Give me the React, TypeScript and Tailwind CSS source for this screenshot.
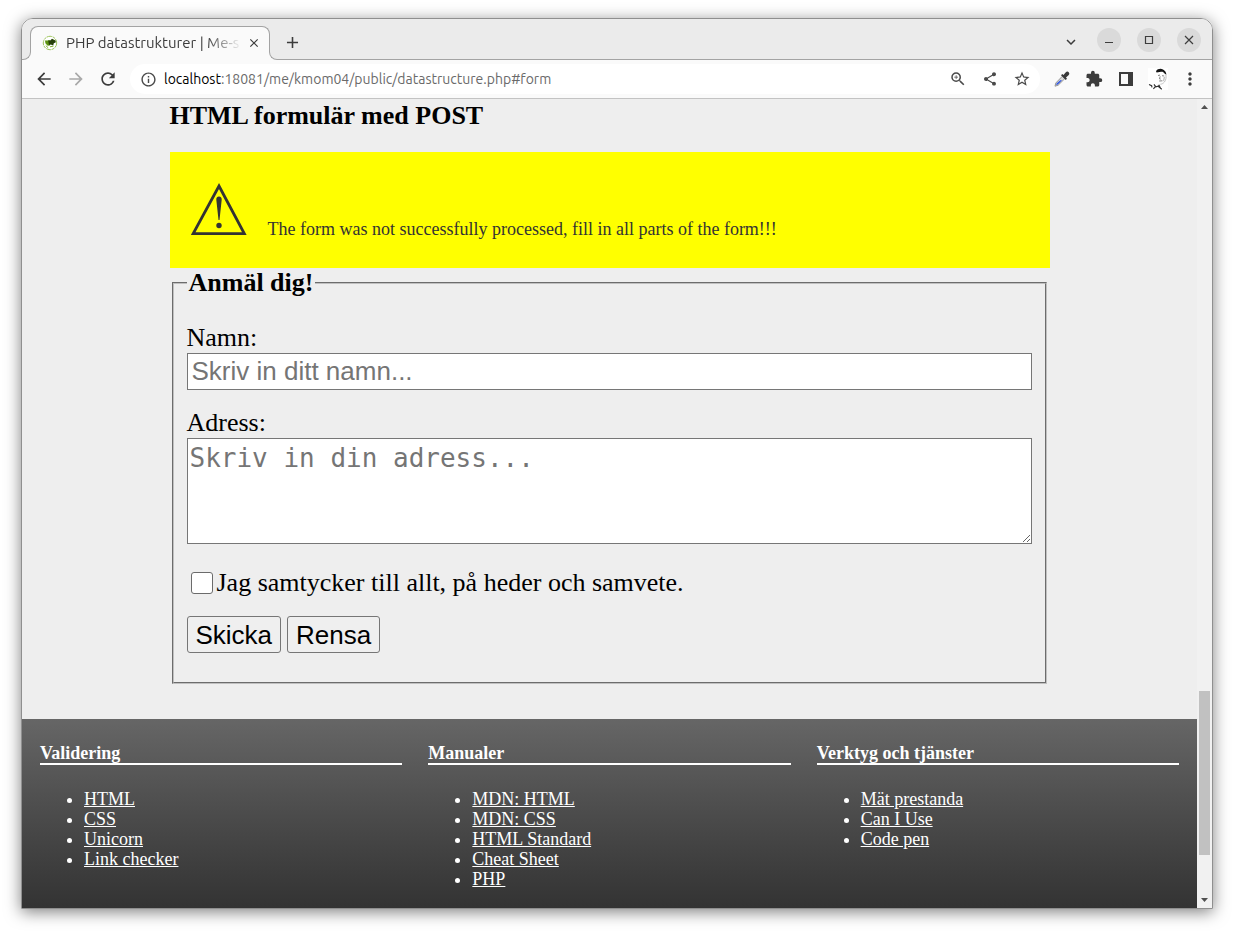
import type { ReactNode } from "react";
import {
  MdAdd,
  MdArrowBack,
  MdArrowForward,
  MdClose,
  MdExpandMore,
  MdExtension,
  MdInfoOutline,
  MdMoreVert,
  MdRefresh,
  MdShare,
  MdStarBorder,
  MdZoomIn,
} from "react-icons/md";

const footerColumns = [
  { title: "Validering", links: ["HTML", "CSS", "Unicorn", "Link checker"] },
  { title: "Manualer", links: ["MDN: HTML", "MDN: CSS", "HTML Standard", "Cheat Sheet", "PHP"] },
  { title: "Verktyg och tjänster", links: ["Mät prestanda", "Can I Use", "Code pen"] },
];

function IconButton({ label, children }: { label: string; children: ReactNode }) {
  return (
    <button type="button" aria-label={label} className="flex size-5 shrink-0 items-center justify-center">
      {children}
    </button>
  );
}

function WindowButton({ label, children }: { label: string; children: ReactNode }) {
  return (
    <button
      type="button"
      aria-label={label}
      className="flex size-6 shrink-0 items-center justify-center rounded-full bg-[#dadada] text-[#3d3d3d]"
    >
      <svg width="10" height="10" viewBox="0 0 10 10" fill="none" stroke="currentColor" strokeWidth="1.2">
        {children}
      </svg>
    </button>
  );
}

function Favicon() {
  return (
    <svg width="16" height="16" viewBox="0 0 16 16" className="shrink-0" aria-hidden="true">
      <circle cx="8" cy="8" r="6.700" fill="#fff" stroke="#9cc45c" strokeWidth="1" strokeDasharray="5 .8 3 .6" />
      <path d="M3 5.600 5.600 5.400 7.600 5l1 4-1.200 1.800-2-.2L3.400 8.200Z" fill="#5d9412" />
      <path d="M6.200 5.400 8.200 5.600 10 3.800l2 .9L13.800 5.800l-.2 1.800-1.800.6-.6 2.400L8.800 9.600 7 10Z" fill="#27400a" />
      <path d="M3.800 10.600 6.200 12.800M8 11.800l3.400-.6" stroke="#84b23a" strokeWidth="1" />
    </svg>
  );
}

function Eyedropper() {
  return (
    <svg width="16" height="16" viewBox="0 0 16 16" aria-hidden="true">
      <path d="M8.400 5.200 10.800 7.600 4.200 14.200 1 15.200l.8-3.200Z" fill="#d8d8d8" stroke="#8c8c8c" strokeWidth=".9" />
      <path d="M6.200 9.200h1.900l-4.300 4.300-1.700.6.500-1.600Z" fill="#2f55e0" />
      <path
        d="M7 4.300 8.300 3l1.200 1L11.600 1.400c1.200-1.200 2.400-.9 3.100-.2.800.8.900 2-.2 3.100L12 6.500l1 1.200L11.700 9Z"
        fill="#3a3a3a"
      />
    </svg>
  );
}

function Avatar() {
  return (
    <svg width="20" height="22" viewBox="0 0 20 22" aria-hidden="true">
      <rect width="20" height="22" fill="#fff" />
      <path d="M8 3.200C9.500.8 13 .2 15 1.600c2 1 3.200 2.800 3.400 5.200l-1.600-1c-1-1.600-2.200-2.200-3.800-2L8.600 4.600Z" fill="#161616" />
      <path d="M17.800 6.500c.7 2.700.2 5.500-1.400 7.500-1.200 1.400-2.600 2.200-4 2.200" fill="none" stroke="#c2c2c2" strokeWidth="1" />
      <path d="M10 7.500l2-.4M14 7.700l2.200.3M12.200 8.400l-.8 2.400 1.400.3M11.200 13l3.200-.2" stroke="#777" strokeWidth=".9" fill="none" />
      <path d="M15.600 9.200l1.600-.4-.8 3.600-1.600 1.200Z" fill="#c4c4c4" />
      <path d="M1 16.500l2.600 1.200.4 1.600M6 16.400l1.800 2.400 2.400-.6 3.600 3M8 17.800l-2.600 3M10.800 16.800l1.800 3.600" stroke="#333" strokeWidth="1.200" fill="none" />
    </svg>
  );
}

function Tab() {
  return (
    <div className="relative h-[34px] w-[240px] shrink-0">
      <div className="absolute inset-0 flex flex-col" aria-hidden="true">
        <div className="flex-1 rounded-t-lg border-x border-t border-[#a3a3a3] bg-[#fafafa]" />
        <div className="h-2 bg-[#fafafa]" />
      </div>
      <div className="absolute bottom-0 -left-2 size-[9px] bg-[#fafafa]" aria-hidden="true">
        <div className="size-full rounded-br-lg border-r border-b border-[#a3a3a3] bg-[#ebebeb]" />
      </div>
      <div className="absolute -right-2 bottom-0 size-[9px] bg-[#fafafa]" aria-hidden="true">
        <div className="size-full rounded-bl-lg border-b border-l border-[#a3a3a3] bg-[#ebebeb]" />
      </div>
      <div className="relative flex h-full items-center pr-2 pl-3">
        <Favicon />
        <span className="ml-2 flex-1 mask-r-from-80% mask-r-to-100% text-[15px] whitespace-nowrap text-[#3c3c3c]">
          PHP datastrukturer | Me-s
        </span>
        <button type="button" aria-label="Close tab" className="ml-1 flex size-4 items-center justify-center">
          <MdClose className="size-[14px] text-[#3c3c3c]" />
        </button>
      </div>
    </div>
  );
}

function BrowserChrome() {
  return (
    <header className="font-[Ubuntu,'Noto_Sans',sans-serif]">
      <div className="flex h-[41px] items-end bg-[#ebebeb] pl-2">
        <Tab />
        <div className="flex h-full flex-1 items-center border-b border-[#a3a3a3] pt-0.5 pr-[11px] pl-3 text-[#3c3c3c]">
          <button type="button" aria-label="New tab" className="mt-1 flex size-5 items-center justify-center">
            <MdAdd className="size-[19px]" />
          </button>
          <div className="ml-auto flex items-center gap-4">
            <button type="button" aria-label="Search tabs" className="mt-1 flex size-5 items-center justify-center">
              <MdExpandMore className="size-[18px]" />
            </button>
            <WindowButton label="Minimize">
              <path d="M1 7.500h8" />
            </WindowButton>
            <WindowButton label="Maximize">
              <path d="M1.500 1.500h7v7h-7z" />
            </WindowButton>
            <WindowButton label="Close">
              <path d="M1 1l8 8M9 1 1 9" />
            </WindowButton>
          </div>
        </div>
      </div>
      <div className="flex items-center gap-3 border-b border-[#c3c3c3] bg-[#fafafa] px-3 py-1 text-[#3c3c3c]">
        <IconButton label="Back">
          <MdArrowBack className="size-5" />
        </IconButton>
        <IconButton label="Forward">
          <MdArrowForward className="size-5 text-[#a9a9a9]" />
        </IconButton>
        <IconButton label="Reload">
          <MdRefresh className="size-5" />
        </IconButton>
        <div className="flex h-[30px] flex-1 items-center gap-3 rounded-full bg-white px-2 text-[#4a4a4a]">
          <div className="flex flex-1 items-center gap-1.5">
            <IconButton label="Site information">
              <MdInfoOutline className="size-[17px]" />
            </IconButton>
            <a href="#form" className="text-sm whitespace-nowrap text-[#6a6a6a]">
              <span className="text-black">localhost</span>:18081/me/kmom04/public/datastructure.php#form
            </a>
          </div>
          <IconButton label="Zoom">
            <MdZoomIn className="size-[18px]" />
          </IconButton>
          <IconButton label="Share">
            <MdShare className="size-4" />
          </IconButton>
          <IconButton label="Bookmark">
            <MdStarBorder className="size-[18px]" />
          </IconButton>
        </div>
        <IconButton label="Color picker">
          <Eyedropper />
        </IconButton>
        <IconButton label="Extensions">
          <MdExtension className="size-[18px]" />
        </IconButton>
        <IconButton label="Side panel">
          <svg width="14" height="14" viewBox="0 0 14 14">
            <path d="M0 0h14v14H0zM2 2v10h7V2z" fill="currentColor" fillRule="evenodd" />
          </svg>
        </IconButton>
        <IconButton label="Profile">
          <Avatar />
        </IconButton>
        <IconButton label="Menu">
          <MdMoreVert className="size-5" />
        </IconButton>
      </div>
    </header>
  );
}

function Warning() {
  return (
    <div role="alert" className="flex items-end gap-5 bg-[#ffff00] px-5 pt-[31px] pb-[29px] text-[#333]">
      <svg width="58" height="56" viewBox="0 0 58 56" className="shrink-0" aria-hidden="true">
        <path d="M29 3 54.300 50.600H3.200Z" fill="none" stroke="currentColor" strokeWidth="2.800" />
        <path d="M29 13.500c1.900 0 2.900 1.300 2.700 3.200L29.500 37h-1L26.300 16.700c-.2-1.900.8-3.200 2.700-3.200Z" fill="currentColor" />
        <circle cx="29" cy="42.500" r="2.700" fill="currentColor" />
      </svg>
      <p className="text-[18px] leading-5">
        The form was not successfully processed, fill in all parts of the form!!!
      </p>
    </div>
  );
}

function SignupForm() {
  const button =
    "h-[37px] rounded-[3px] border border-[#767676] bg-[#efefef] px-2 font-['Liberation_Sans',Arial,sans-serif] text-[26px] leading-[30px]";
  return (
    <form id="form" onSubmit={(e) => e.preventDefault()}>
      <fieldset className="mr-[3px] ml-0.5 border-2 border-[#c0c0c0] px-[13px] pt-[25px] pb-[29px] [border-style:groove]">
        <legend className="px-0.5 font-bold">Anmäl dig!</legend>
        <div className="flex flex-col">
          <label htmlFor="name">Namn:</label>
          <input
            id="name"
            type="text"
            placeholder="Skriv in ditt namn..."
            className="h-[37px] w-full border border-[#767676] bg-white px-1 font-['Liberation_Sans',Arial,sans-serif] placeholder:text-[#757575]"
          />
        </div>
        <div className="mt-[18px] flex flex-col">
          <label htmlFor="address">Adress:</label>
          <textarea
            id="address"
            placeholder="Skriv in din adress..."
            className="h-[106px] w-full resize border border-[#767676] bg-white px-0.5 py-1 font-['DejaVu_Sans_Mono',monospace] placeholder:text-[#757575]"
          />
        </div>
        <div className="mt-6 flex items-center gap-1 pl-1">
          <input
            id="consent"
            type="checkbox"
            className="size-[22px] appearance-none rounded-[3px] border border-[#6b6b6b] bg-white checked:bg-[#0075ff]"
          />
          <label htmlFor="consent">Jag samtycker till allt, på heder och samvete.</label>
        </div>
        <div className="mt-[18px] flex gap-1.5">
          <button type="submit" className={button}>
            Skicka
          </button>
          <button type="reset" className={button}>
            Rensa
          </button>
        </div>
      </fieldset>
    </form>
  );
}

function PageFooter() {
  return (
    <footer className="grid flex-1 grid-cols-3 gap-[26px] bg-linear-to-b from-[#666] to-[#333] px-[18px] pt-6 pb-4 text-[18px] leading-5 text-white">
      {footerColumns.map((column) => (
        <section key={column.title}>
          <h4 className="border-b-2 border-white font-bold">{column.title}</h4>
          <ul className="mt-6 list-disc pl-11">
            {column.links.map((link) => (
              <li key={link}>
                <a href="#form" className="underline">
                  {link}
                </a>
              </li>
            ))}
          </ul>
        </section>
      ))}
    </footer>
  );
}

function Scrollbar() {
  return (
    <div className="flex w-[15px] shrink-0 flex-col items-center bg-[#f1f1f1] py-[5px]" aria-hidden="true">
      <svg width="7" height="6" viewBox="0 0 7 6" fill="#505050">
        <path d="M0 5 3.500 1 7 5Z" />
      </svg>
      <div className="grow-[581]" />
      <div className="w-[11px] grow-[164] bg-[#c1c1c1]" />
      <div className="grow-[42]" />
      <svg width="7" height="6" viewBox="0 0 7 6" fill="#505050">
        <path d="M0 1 3.500 5 7 1Z" />
      </svg>
    </div>
  );
}

export default function App() {
  return (
    <div className="flex min-h-screen flex-col bg-white px-[21px] pt-[18px] pb-6">
      <div className="flex flex-1 flex-col overflow-hidden rounded-t-xl border border-[#8f8f8f] shadow-[0_3px_16px_rgba(0,0,0,0.5)]">
        <BrowserChrome />
        <div className="flex flex-1">
          <div className="flex flex-1 flex-col bg-[#eee] font-['Liberation_Serif','Times_New_Roman',serif] text-black">
            <main className="mx-auto w-full max-w-[880px] pt-0.5 pb-[35px] text-[26px] leading-[30px]">
              <h3 className="mb-[21px] font-bold">HTML formulär med POST</h3>
              <Warning />
              <SignupForm />
            </main>
            <PageFooter />
          </div>
          <Scrollbar />
        </div>
      </div>
    </div>
  );
}
